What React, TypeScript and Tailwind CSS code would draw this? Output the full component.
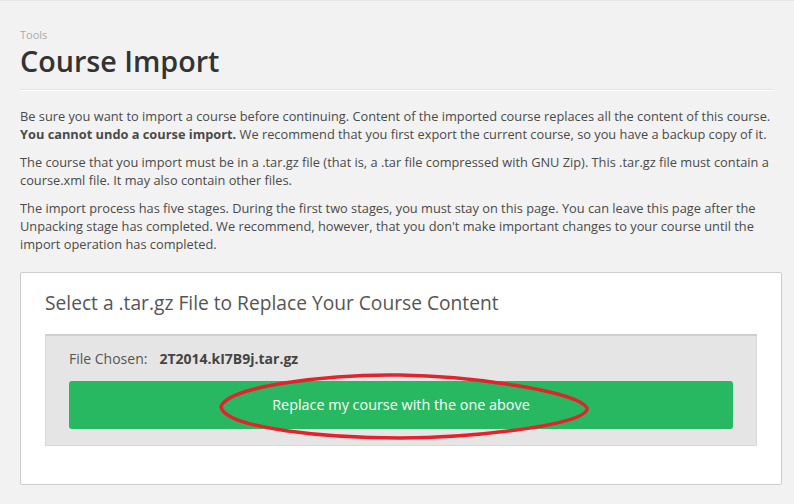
import React from "react";

const App: React.FunctionComponent = () => {
  return (
    <div
      className="relative min-h-[504px] w-full bg-[#f2f2f2] border-t border-[#e6e6e6]"
      style={{ fontFamily: '"Open Sans", "Liberation Sans", sans-serif' }}
    >
      <div className="px-5 pt-[27px]">
        <div className="text-[11px] leading-[14px] text-[#aaaaaa]">Tools</div>
        <h1 className="text-[28.7px] leading-[40px] font-semibold text-[#333333] -mt-[1px]">
          Course Import
        </h1>
        <div className="mt-[8px] border-t border-[#e4e4e4] border-b border-b-white" />

        <div className="mt-[16px] text-[12.8px] leading-[18px] text-[#4a4a4a] space-y-[10px] whitespace-nowrap">
          <p>
            Be sure you want to import a course before continuing. Content of
            the imported course replaces all the content of this course.
            <br />
            <strong className="font-bold">You cannot undo a course import.</strong>{" "}
            We recommend that you first export the current course, so you have
            a backup copy of it.
          </p>
          <p>
            The course that you import must be in a .tar.gz file (that is, a
            .tar file compressed with GNU Zip). This .tar.gz file must contain
            a
            <br />
            course.xml file. It may also contain other files.
          </p>
          <p>
            The import process has five stages. During the first two stages,
            you must stay on this page. You can leave this page after the
            <br />
            Unpacking stage has completed. We recommend, however, that you
            don't make important changes to your course until the
            <br />
            import operation has completed.
          </p>
        </div>

        <div className="mt-[19px] w-[762px] bg-white border border-[#cccccc] rounded-[2px] pt-[16px] pb-[38px] px-[24px]">
          <h2 className="text-[19.2px] leading-[28px] text-[#555555]">
            Select a .tar.gz File to Replace Your Course Content
          </h2>
          <div className="relative mt-[17px] bg-[#e5e5e5] border-t-2 border-t-[#cfcfcf] border-x border-x-[#d9d9d9] border-b border-b-[#d9d9d9] px-[23px] pt-[13px] pb-[16px]">
            <div className="text-[14px] leading-[20px] text-[#555555]">
              File Chosen:
              <span className="ml-[12px] font-bold text-[#444444]">
                2T2014.kI7B9j.tar.gz
              </span>
            </div>
            <button className="mt-[12px] w-full h-[48px] rounded-[3px] bg-[#29b862] text-white text-[14.4px]">
              Replace my course with the one above
            </button>
          </div>
        </div>
      </div>

      <svg
        className="absolute left-0 top-0 pointer-events-none"
        width="794"
        height="504"
        viewBox="0 0 794 504"
      >
        <path
          d="M221 406 C 226 385, 330 373, 400 374 C 470 375, 578 390, 587 407 C 590 424, 470 437, 400 437 C 330 437, 226 428, 221 406 Z"
          fill="none"
          stroke="#e3232c"
          strokeWidth="3.5"
        />
      </svg>
    </div>
  );
};

export default App;
